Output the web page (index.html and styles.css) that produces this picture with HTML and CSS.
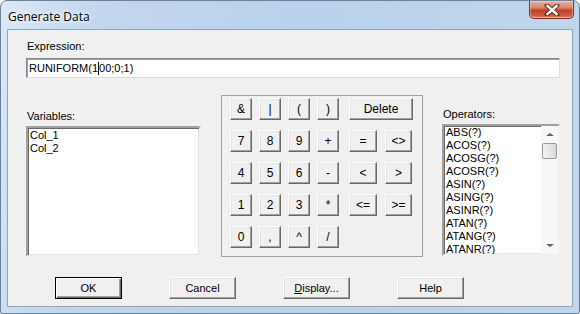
FILE: index.html
```html
<!DOCTYPE html>
<html lang="en">
<head>
    <meta charset="UTF-8">
    <title>Generate Data</title>
    <link rel="stylesheet" href="styles.css">
</head>
<body>
    <div class="window">
        <!-- 标题栏 -->
        <div class="titlebar">
            <span class="title">Generate Data</span>
            <a href="javascript:;" class="close_btn">
                <svg width="16" height="12" viewBox="0 0 16 12">
                    <path d="M3 1.5 L13 10.5 M13 1.5 L3 10.5" stroke="#5a2a22" stroke-width="4.2" stroke-linecap="square"/>
                    <path d="M3.4 2 L12.6 10 M12.6 2 L3.4 10" stroke="#fff" stroke-width="2.4" stroke-linecap="square"/>
                </svg>
            </a>
        </div>
        <div class="client">
            <div class="label">Expression:</div>
            <div class="field">RUNIFORM(1<span class="caret"></span>00;0;1)</div>

            <div class="middle">
                <!-- 变量列表 -->
                <div class="vars">
                    <div class="label">Variables:</div>
                    <ul class="list var_list">
                        <li>Col_1</li>
                        <li>Col_2</li>
                    </ul>
                </div>
                <!-- 计算器按键 -->
                <div class="keypad">
                    <div class="row">
                        <span class="btn key">&amp;</span><span class="btn key">|</span><span class="btn key">(</span><span class="btn key">)</span>
                        <span class="btn wide">Delete</span>
                    </div>
                    <div class="row">
                        <span class="btn key">7</span><span class="btn key">8</span><span class="btn key">9</span><span class="btn key">+</span>
                        <span class="btn op">=</span><span class="btn op">&lt;&gt;</span>
                    </div>
                    <div class="row">
                        <span class="btn key">4</span><span class="btn key">5</span><span class="btn key">6</span><span class="btn key">-</span>
                        <span class="btn op">&lt;</span><span class="btn op">&gt;</span>
                    </div>
                    <div class="row gap_more">
                        <span class="btn key">1</span><span class="btn key">2</span><span class="btn key">3</span><span class="btn key">*</span>
                        <span class="btn op">&lt;=</span><span class="btn op">&gt;=</span>
                    </div>
                    <div class="row">
                        <span class="btn key">0</span><span class="btn key">,</span><span class="btn key">^</span><span class="btn key">/</span>
                    </div>
                </div>
                <!-- 运算符列表 -->
                <div class="ops">
                    <div class="label">Operators:</div>
                    <div class="list ops_list">
                        <ul class="items">
                            <li>ABS(?)</li>
                            <li>ACOS(?)</li>
                            <li>ACOSG(?)</li>
                            <li>ACOSR(?)</li>
                            <li>ASIN(?)</li>
                            <li>ASING(?)</li>
                            <li>ASINR(?)</li>
                            <li>ATAN(?)</li>
                            <li>ATANG(?)</li>
                            <li>ATANR(?)</li>
                        </ul>
                        <div class="scrollbar">
                            <span class="arrow up"></span>
                            <span class="thumb"></span>
                            <span class="track"></span>
                            <span class="arrow down"></span>
                        </div>
                    </div>
                </div>
            </div>

            <div class="actions">
                <span class="btn action default">OK</span>
                <span class="btn action">Cancel</span>
                <span class="btn action"><u>D</u>isplay...</span>
                <span class="btn action">Help</span>
            </div>
        </div>
    </div>
</body>
</html>
```

FILE: styles.css
```css
body{
    margin: 0;
    background: #fff;
}
.window{
    width: 580px;
    height: 314px;
    box-sizing: border-box;
    border: 1px solid #6b829c;
    border-radius: 7px 7px 2px 2px;
    background: linear-gradient(100deg, #dce8f5 0, #c3d7ee 90px, #b9d1ea 300px, #c1d6ec 100%);
    padding: 0 6px 6px 6px;
    display: flex;
    flex-direction: column;
    font-family: "Liberation Sans", Arial, sans-serif;
    font-size: 11px;
    color: #000;
}
.titlebar{
    height: 28px;
    display: flex;
    align-items: flex-start;
    justify-content: space-between;
}
.title{
    font-family: "Open Sans", "Noto Sans", sans-serif;
    font-size: 12px;
    margin: 7px 0 0 1px;
    text-shadow: 0 0 6px #fff, 0 0 4px #fff;
}
.close_btn{
    width: 45px;
    height: 18px;
    box-sizing: border-box;
    margin-right: -1px;
    border: 1px solid #7a3326;
    border-top: none;
    border-radius: 0 0 5px 5px;
    background: linear-gradient(#eab2a3 0, #d9826c 40%, #c2412a 55%, #cc5a43 85%, #e08a70 100%);
    display: flex;
    align-items: center;
    justify-content: center;
    box-shadow: inset 0 0 0 1px rgba(255,255,255,0.35);
}
.client{
    flex: 1;
    border: 1px solid #8ea3bc;
    background: #f0f0f0;
    padding: 10px 12px 0 18px;
}
.label{
    line-height: 13px;
    height: 13px;
    padding-left: 1px;
}
.field{
    margin-top: 5px;
    width: 534px;
    height: 20px;
    box-sizing: border-box;
    background: #fff;
    border: 1px solid;
    border-color: #828790 #dcdcdc #dcdcdc #828790;
    box-shadow: inset 1px 1px 0 #a0a0a0;
    line-height: 18px;
    padding-left: 2px;
}
.caret{
    display: inline-block;
    width: 1px;
    height: 13px;
    background: #000;
    vertical-align: -3px;
}
.middle{
    margin-top: 17px;
    display: flex;
    align-items: flex-start;
}
.vars{
    width: 175px;
    margin-top: 15px;
}
.list{
    list-style: none;
    margin: 3px 0 0 0;
    padding: 1px 0 0 2px;
    box-sizing: border-box;
    background: #fff;
    border: 2px solid;
    border-color: #a0a0a0 #f0f0f0 #f0f0f0 #a0a0a0;
    box-shadow: inset 1px 1px 0 #696969, inset -1px -1px 0 #e3e3e3;
    line-height: 13px;
}
.var_list{
    height: 131px;
}
.keypad{
    width: 202px;
    height: 162px;
    box-sizing: border-box;
    margin-left: 20px;
    border: 1px solid #a0a0a0;
    padding: 2px 0 0 8px;
}
.row{
    display: flex;
    height: 22px;
    margin-bottom: 10px;
}
.row.gap_more{
    margin-bottom: 10px;
    margin-top: 1px;
}
.btn{
    box-sizing: border-box;
    background: #f0f0f0;
    border: 1px solid;
    border-color: #fff #696969 #696969 #fff;
    box-shadow: inset -1px -1px 0 #a0a0a0, inset 1px 1px 0 #e3e3e3;
    display: flex;
    align-items: center;
    justify-content: center;
    font-size: 12px;
    user-select: none;
}
.key{
    width: 22px;
    margin-right: 7px;
}
.wide{
    width: 64px;
    margin-left: 3px;
}
.op{
    width: 28px;
    margin-left: 3px;
}
.op + .op{
    margin-left: 8px;
    width: 27px;
}
.ops{
    width: 118px;
    margin-left: 19px;
    margin-top: 13px;
}
.ops_list{
    height: 132px;
    display: flex;
    padding: 0;
    overflow: hidden;
}
.items{
    list-style: none;
    margin: 0;
    padding: 0 0 0 2px;
    flex: 1;
    line-height: 13px;
}
.scrollbar{
    width: 17px;
    display: flex;
    flex-direction: column;
    background: #f7f7f7;
}
.arrow{
    height: 17px;
    position: relative;
}
.arrow::after{
    content: "";
    position: absolute;
    left: 5px;
    top: 7px;
    border-left: 4px solid transparent;
    border-right: 4px solid transparent;
}
.arrow.up::after{
    border-bottom: 3px solid #606060;
}
.arrow.down::after{
    border-top: 3px solid #606060;
}
.thumb{
    height: 16px;
    margin: 0 1px;
    box-sizing: border-box;
    border: 1px solid #9a9a9a;
    border-radius: 2px;
    background: linear-gradient(90deg, #f4f4f4, #e6e6e6 50%, #d8d8d8);
}
.track{
    flex: 1;
}
.actions{
    margin-top: 20px;
    display: flex;
    padding-left: 29px;
    gap: 47px;
}
.action{
    width: 67px;
    height: 22px;
    font-size: 11px;
}
.action.default{
    border-color: #000;
    box-shadow: inset 1px 1px 0 #fff, inset -1px -1px 0 #696969, inset -2px -2px 0 #a0a0a0;
}
```
